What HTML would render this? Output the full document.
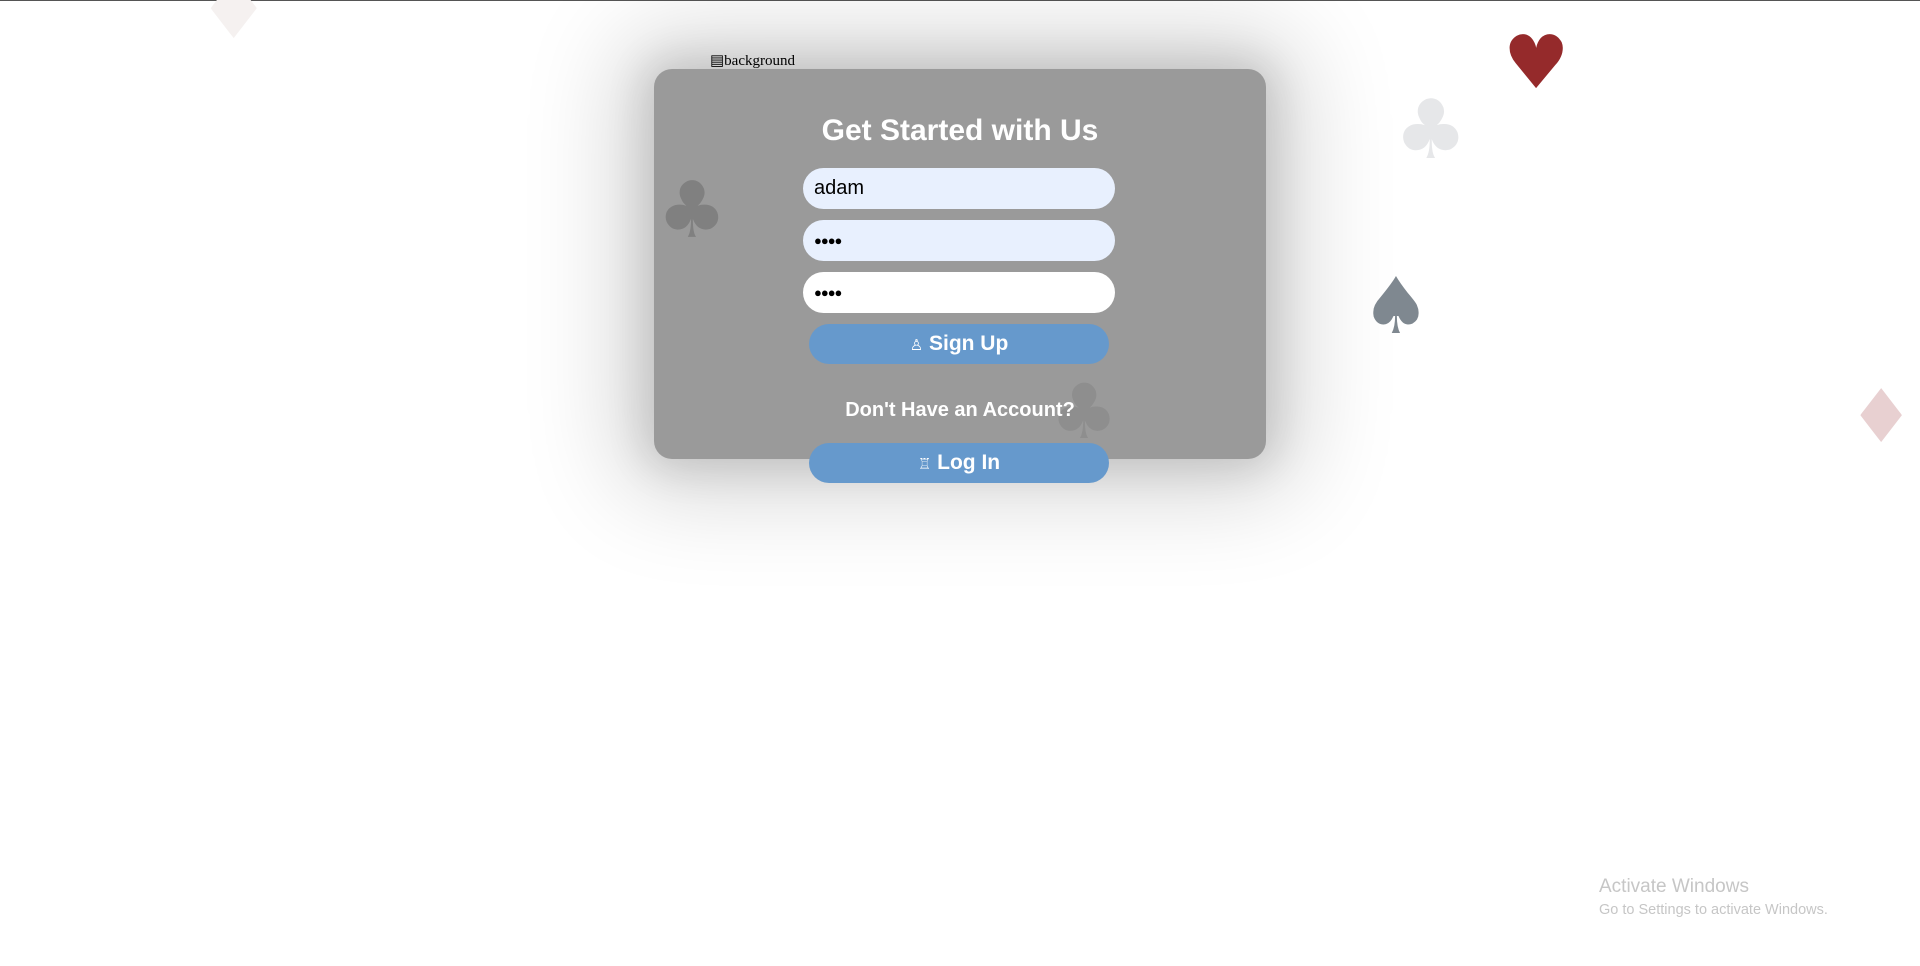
<!DOCTYPE html>
<html><head><meta charset="utf-8"><style>
html,body{margin:0;padding:0;width:1920px;height:966px;overflow:hidden;background:#fff;font-family:"Liberation Sans",Arial,sans-serif;position:relative}
.topline{position:absolute;left:0;top:0;width:1920px;height:1px;background:#555}
.s{position:absolute;font-family:"DejaVu Sans",sans-serif;line-height:1}
.card{position:absolute;left:654px;top:69px;width:612px;height:390px;background:#9a9a9a;border-radius:18px;box-shadow:0 0 95px 35px rgba(0,0,0,.17),0 0 40px 10px rgba(0,0,0,.12)}
.title{position:absolute;left:654px;top:114px;width:612px;text-align:center;color:#fff;font-weight:bold;font-size:30px}
.inp{position:absolute;left:803px;width:312px;height:41px;border-radius:21px;background:#e8f0fe;box-sizing:border-box;padding-left:11px;font-size:20px;line-height:41px;color:#000}
.pw{font-size:13px;letter-spacing:-1px}
.btn{position:absolute;left:809px;width:300px;height:40px;border-radius:20px;background:#6699cc;color:#fff;font-weight:bold;font-size:21px;text-align:center;line-height:40px}
.alt{position:absolute;left:710px;top:51px;font-family:"Liberation Serif",serif;font-size:15px;color:#000}
</style></head><body>
<div class="topline"></div>
<div class="s" style="left:197px;top:-30px;font-size:82px;color:#f5f1f0">♦</div>
<div class="s" style="left:1752px;top:-52px;font-size:62px;color:#cdd0d3">♠</div>
<div class="card"></div>
<div class="s" style="left:657px;top:172px;font-size:78px;color:#808080">♣</div>
<div class="s" style="left:1050px;top:374px;font-size:76px;color:#8e8e8e">♣</div>
<div class="alt">&#9636;background</div>
<div class="title">Get Started with Us</div>
<div class="inp" style="top:168px">adam</div>
<div class="inp pw" style="top:220px">&#9679;&#9679;&#9679;&#9679;</div>
<div class="inp pw" style="top:272px;background:#fff">&#9679;&#9679;&#9679;&#9679;</div>
<div class="btn" style="top:324px"><span style="font-family:'DejaVu Sans';font-size:15px;font-weight:normal">♙</span> Sign Up</div>
<div style="position:absolute;left:654px;top:399px;width:612px;text-align:center;color:#fff;font-weight:bold;font-size:20px">Don't Have an Account?</div>
<div class="btn" style="top:443px"><span style="font-family:'DejaVu Sans';font-size:15px;font-weight:normal">♖</span> Log In</div>
<div class="s" style="left:1503px;top:26px;font-size:74px;color:#952a2b">♥</div>
<div class="s" style="left:1394px;top:90px;font-size:82px;color:#e6e7e9">♣</div>
<div class="s" style="left:1361px;top:268px;font-size:78px;color:#7f8890">♠</div>
<div class="s" style="left:1848px;top:380px;font-size:74px;color:#e8d0d1">♦</div>
<div style="position:absolute;left:1599px;top:876px;color:#c6c6c6;font-size:19px">Activate Windows</div>
<div style="position:absolute;left:1599px;top:902px;color:#c6c6c6;font-size:14.5px">Go to Settings to activate Windows.</div>
</body></html>
